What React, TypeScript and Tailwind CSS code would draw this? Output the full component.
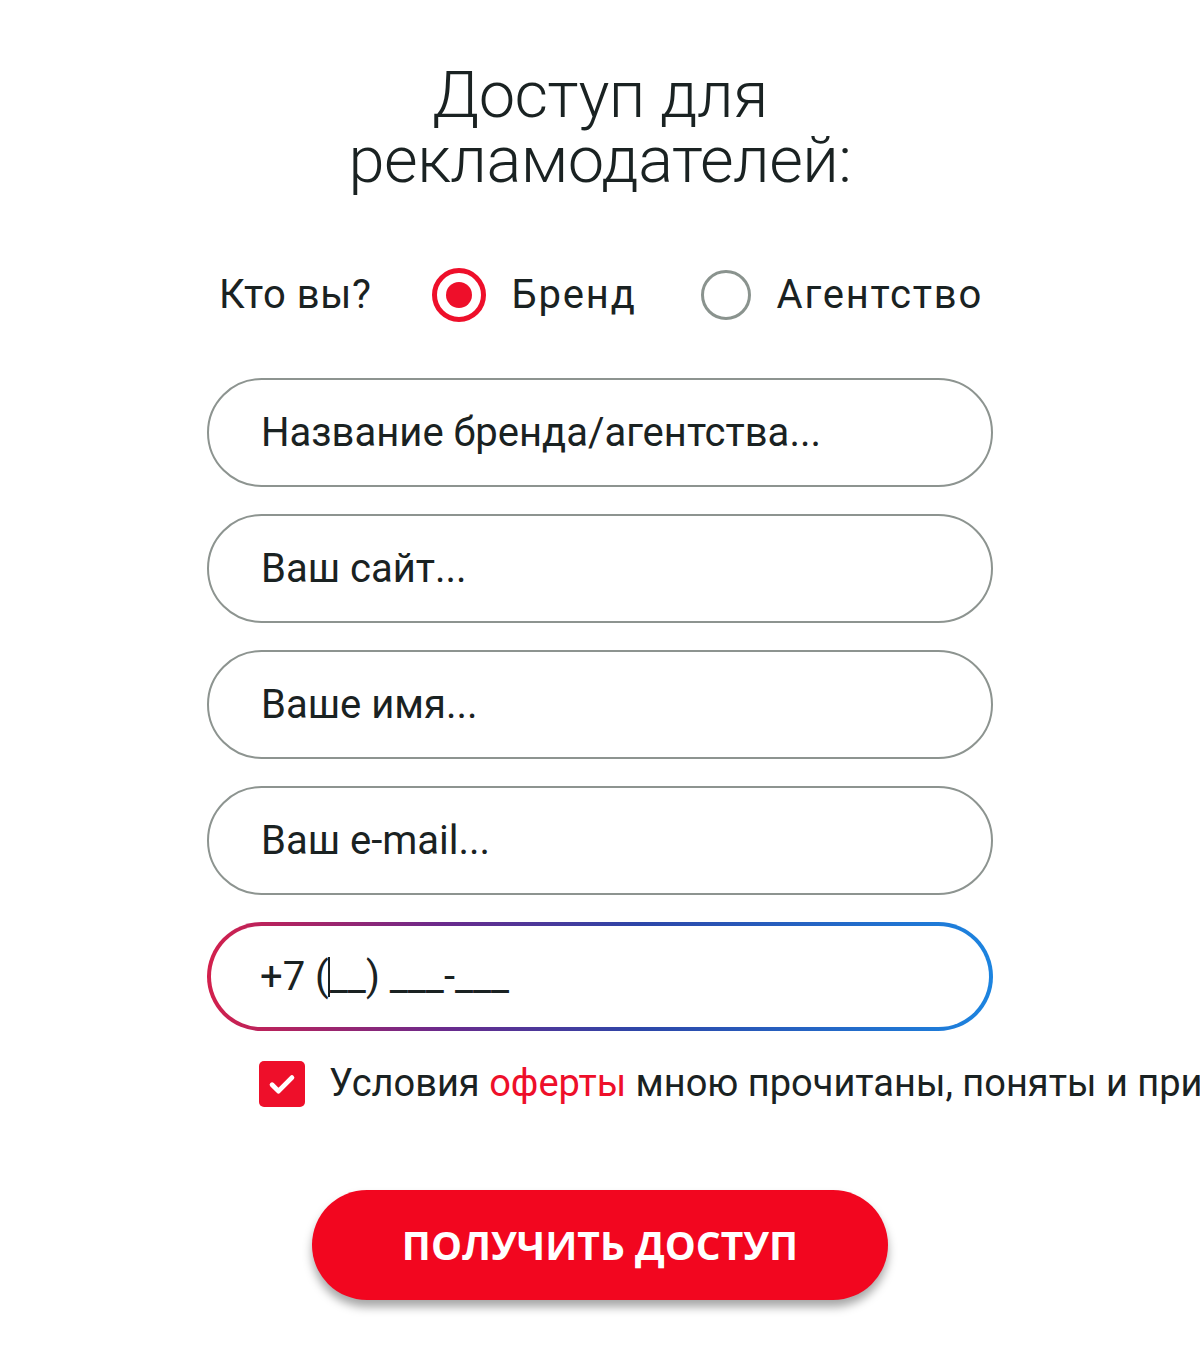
import { useState } from "react";

const fields = ["Название бренда/агентства...", "Ваш сайт...", "Ваше имя...", "Ваш e-mail..."];

function Radio({ checked, label }: { checked: boolean; label: string }) {
  return (
    <label className="flex items-center gap-[26px]">
      {checked ? (
        <span className="flex h-[54px] w-[54px] items-center justify-center rounded-full border-[5px] border-[#ee0f2a]">
          <span className="h-[26px] w-[26px] rounded-full bg-[#ee0f2a]" />
        </span>
      ) : (
        <span className="h-[50px] w-[50px] rounded-full border-[3px] border-[#8a938e]" />
      )}
      <span>{label}</span>
    </label>
  );
}

export default function App() {
  const [agreed] = useState(true);

  return (
    <div className="min-h-[1355px] w-full overflow-hidden bg-white font-['Roboto',sans-serif] text-[#1a2222]">
      <div className="mx-auto flex w-[786px] flex-col items-center pt-[63px]">
        <h1 className="text-center text-[65px] font-light leading-[65px] tracking-[-0.5px]">
          Доступ для
          <br />
          рекламодателей:
        </h1>

        <div className="mt-[75px] flex w-full items-center pl-[12px] text-[40px] leading-none tracking-[1.8px]">
          <span className="mr-[60px] tracking-[0.6px]">Кто вы?</span>
          <Radio checked label="Бренд" />
          <span className="w-[64px]" />
          <Radio checked={false} label="Агентство" />
        </div>

        <div className="mt-[56px] flex w-full flex-col gap-[27px]">
          {fields.map((f) => (
            <div
              key={f}
              className="flex h-[109px] items-center rounded-full border-2 border-[#8d9490] pl-[52px] text-[40px]"
            >
              {f}
            </div>
          ))}
          <div className="rounded-full bg-[linear-gradient(to_right,#d3204c,#6a2a8c_30%,#2d46a8_55%,#1c84e0)] p-[4px]">
            <div className="flex h-[101px] items-center rounded-full bg-white pl-[49px] text-[40px]">
              +7 (<span className="-ml-[1px] inline-block h-[40px] w-[2px] bg-[#1a2222]" />__) ___-___
            </div>
          </div>
        </div>

        <div className="mt-[24px] flex w-full items-center gap-[24px] whitespace-nowrap pl-[52px] text-[38px]">
          <span className="flex h-[46px] w-[46px] shrink-0 items-center justify-center rounded-[5px] bg-[#ee0f2a]">
            {agreed && (
              <svg viewBox="0 0 24 24" className="h-[34px] w-[34px]" fill="none" stroke="white" strokeWidth="3.4" strokeLinecap="round" strokeLinejoin="round">
                <path d="M5 12.5l4.5 4.5L19 7.5" />
              </svg>
            )}
          </span>
          <span>
            Условия <span className="text-[#ee0f2a]">оферты</span> мною прочитаны, поняты и приняты
          </span>
        </div>

        <button className="mt-[78px] flex h-[110px] w-[576px] items-center justify-center rounded-full bg-[#f2061f] font-['Open_Sans',sans-serif] text-[39px] font-bold text-white shadow-[0_7px_10px_rgba(0,0,0,0.35)]">
          ПОЛУЧИТЬ ДОСТУП
        </button>
      </div>
    </div>
  );
}
